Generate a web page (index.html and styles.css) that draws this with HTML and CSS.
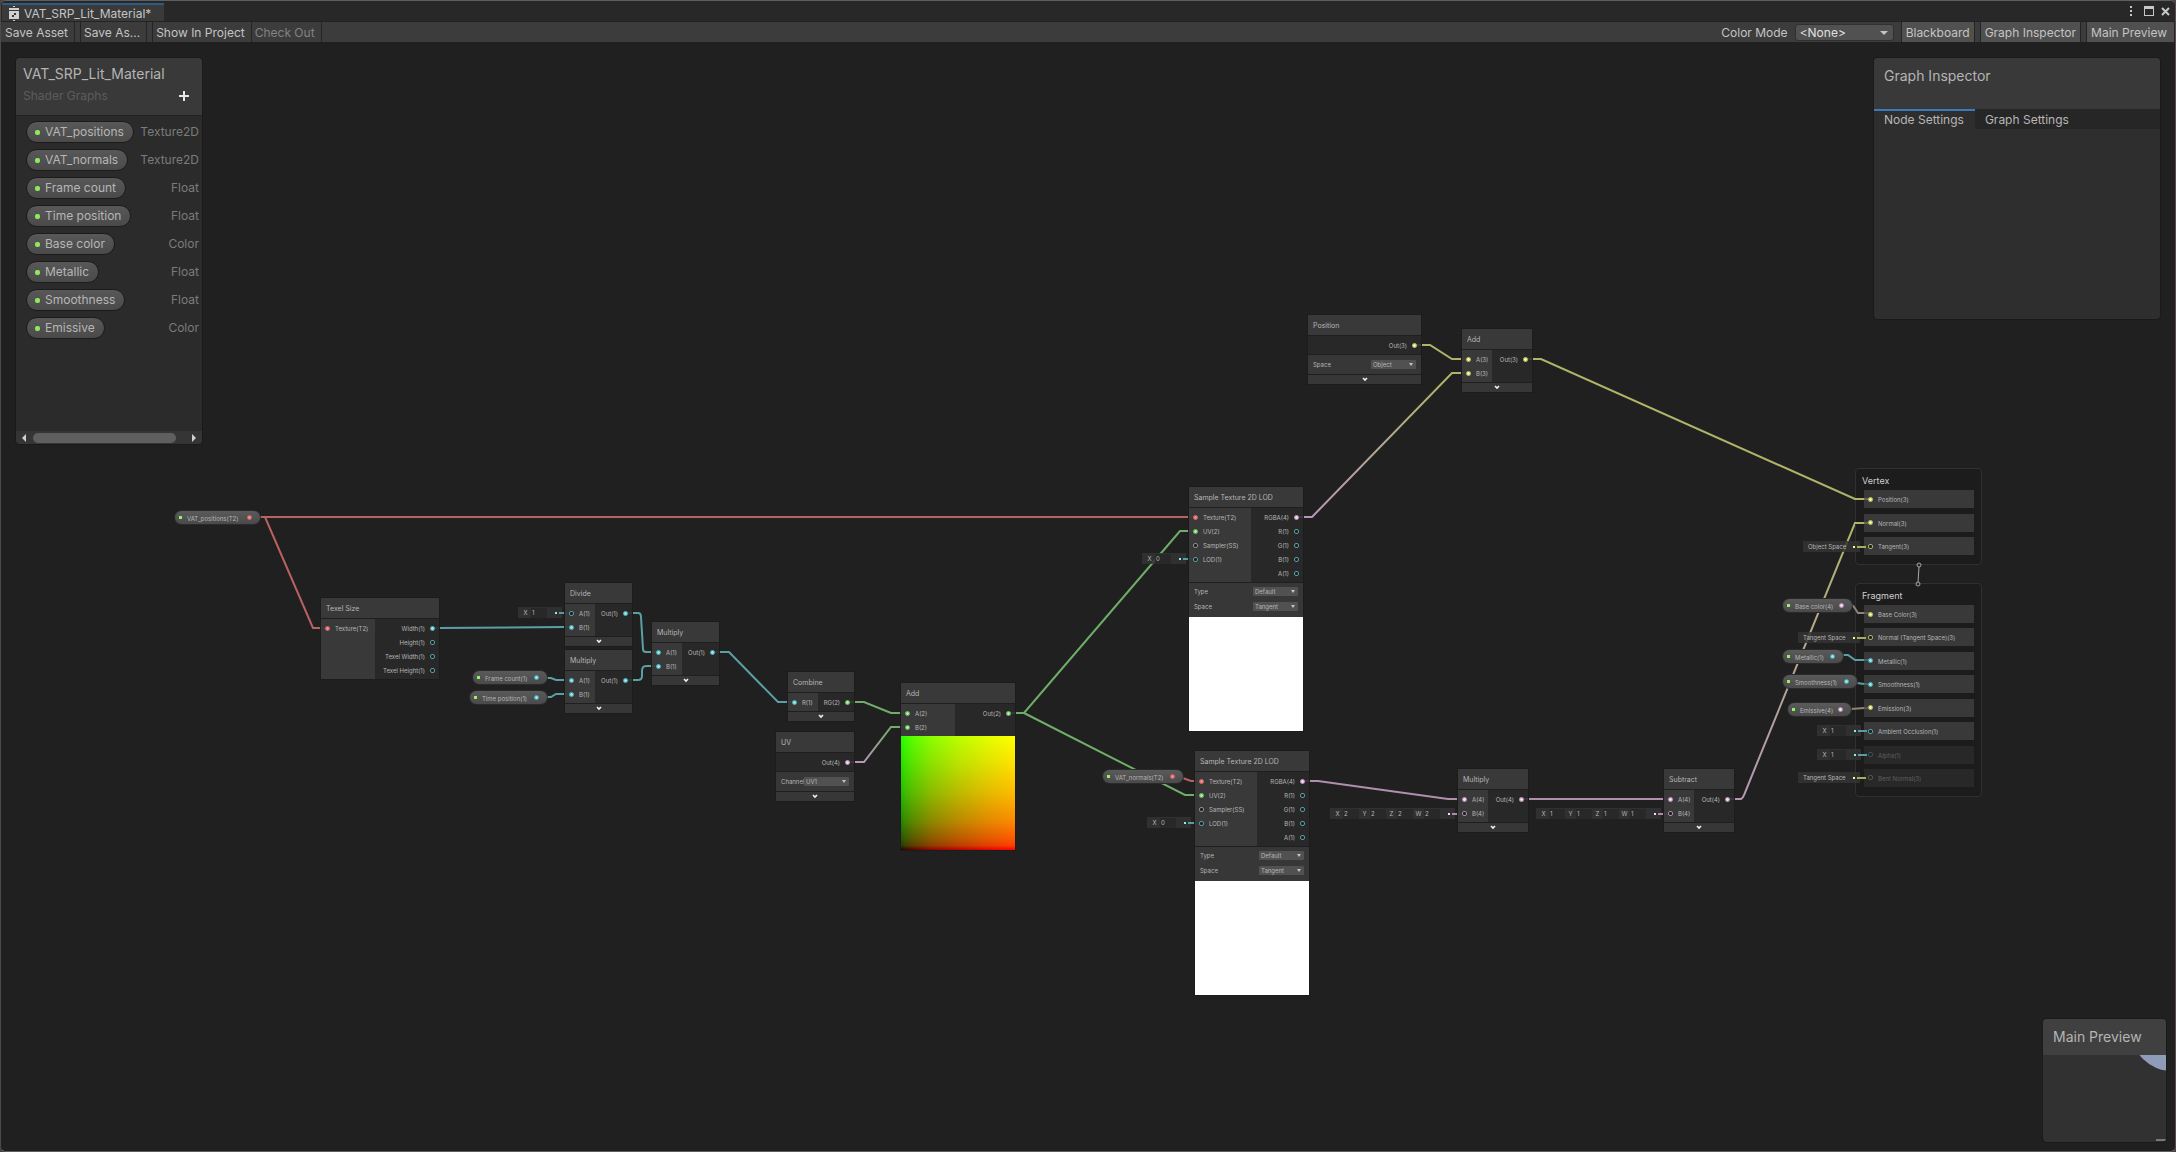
FILE: index.html
```html
<!DOCTYPE html>
<html lang="en">
<head>
<meta charset="utf-8">
<title>VAT_SRP_Lit_Material</title>
<link rel="stylesheet" href="styles.css">
</head>
<body>
<div class="window">
  <header class="titlebar">
    <div class="doc-tab">
      <svg class="doc-icon" width="12" height="16" viewBox="0 0 12 16"><path fill="#d0d0d0" fill-rule="evenodd" d="M5 0h2v1H5zM1 2h10v2H1zM1 5h10v8H1zM5 14h2v1H5zM6 7v2H4v2h2V9h2V7z"/></svg>
      <span>VAT_SRP_Lit_Material*</span>
    </div>
    <div class="window-controls">
      <button aria-label="Menu"><svg width="4" height="12" viewBox="0 0 4 12"><path fill="#c8c8c8" d="M1 1h2v2H1zM1 5h2v2H1zM1 9h2v2H1z"/></svg></button>
      <button aria-label="Maximize"><svg width="10" height="10" viewBox="0 0 10 10"><path fill="#c8c8c8" fill-rule="evenodd" d="M0 0h10v10H0zM1 3v6h8V3z"/></svg></button>
      <button aria-label="Close"><svg width="9" height="9" viewBox="0 0 9 9"><path stroke="#c8c8c8" stroke-width="2" d="M1 1l7 7M8 1l-7 7"/></svg></button>
    </div>
  </header>

  <nav class="toolbar">
    <button class="tool">Save Asset</button>
    <span class="tool-gap"></span>
    <button class="tool">Save As...</button>
    <span class="tool-gap"></span>
    <button class="tool">Show In Project</button>
    <button class="tool" disabled>Check Out</button>
    <span class="spacer"></span>
    <label class="tool-label" for="color-mode">Color Mode</label>
    <span class="dropdown dropdown-mode"><select id="color-mode"><option>&lt;None&gt;</option></select></span>
    <button class="tool on first-on">Blackboard</button>
    <span class="tool-gap"></span>
    <button class="tool on">Graph Inspector</button>
    <span class="tool-gap"></span>
    <button class="tool on">Main Preview</button>
  </nav>

  <main class="graph">
    <svg class="edges" width="2174" height="1108" viewBox="1 42 2174 1108">
      <defs>
        <linearGradient id="g-uv" gradientUnits="userSpaceOnUse" x1="864" y1="0" x2="891" y2="0"><stop offset="0" stop-color="#b597b5"/><stop offset="1" stop-color="#6fae68"/></linearGradient>
        <linearGradient id="g-pos" gradientUnits="userSpaceOnUse" x1="1312" y1="0" x2="1452" y2="0"><stop offset="0" stop-color="#b597b5"/><stop offset="1" stop-color="#b0b468"/></linearGradient>
        <linearGradient id="g-nrm" gradientUnits="userSpaceOnUse" x1="0" y1="799" x2="0" y2="523"><stop offset="0" stop-color="#b597b5"/><stop offset="1" stop-color="#b0b468"/></linearGradient>
      </defs>
      <path class="e-tex" d="M258 517H1195M258 517H265L313 628H328"/>
      <path class="e-float" d="M432 628H439L565 627H572"/>
      <path class="e-float" d="M626 613H638Q641 613 641 617L643 649Q643 652 646 652H658"/>
      <path class="e-float" d="M626 680H638Q642 680 642 676V671Q642 666 646 666H658"/>
      <path class="e-float" d="M544 678H551L556 680H572M544 697H551L556 694H572"/>
      <path class="e-float" d="M712 652H729L778 702H795"/>
      <path class="e-vec2" d="M847 702H864L891 713H907"/>
      <path stroke="url(#g-uv)" d="M847 762H864L891 727H907"/>
      <path class="e-vec2" d="M1008 713H1024L1180 531H1195M1024 713L1185 795H1201"/>
      <path class="e-tex" d="M1180 777L1191 781H1201"/>
      <path stroke="url(#g-pos)" d="M1296 517H1312L1452 373H1469"/>
      <path class="e-vec3" d="M1414 345H1430L1452 359H1469M1525 359H1541L1855 499H1870"/>
      <path class="e-vec4" d="M1302 781H1318L1448 799H1465M1521 799H1671"/>
      <path stroke="url(#g-nrm)" d="M1727 799H1741Q1743 798 1744 795L1855 523H1870"/>
    </svg>

    <!-- texture size and frame lookup -->
    <div class="pill-node" style="left:173px;top:468px;width:87px"><i class="key"></i><span>VAT_positions(T2)</span><i class="port tex on"></i></div>

    <section class="node" style="left:320px;top:556px;width:118px">
      <h3>Texel Size</h3>
      <div class="ports in54">
        <ul class="in"><li><i class="port tex on"></i>Texture(T2)</li></ul>
        <ul class="out"><li>Width(1)<i class="port float on"></i></li><li>Height(1)<i class="port float"></i></li><li>Texel Width(1)<i class="port float"></i></li><li>Texel Height(1)<i class="port float"></i></li></ul>
      </div>
    </section>

    <div class="slot float" style="left:517px;top:565px"><label for="dv-x">X</label><input id="dv-x" value="1"></div>
    <section class="node" style="left:564px;top:541px;width:67px">
      <h3>Divide</h3>
      <div class="ports in30">
        <ul class="in"><li><i class="port float"></i>A(1)</li><li><i class="port float on"></i>B(1)</li></ul>
        <ul class="out"><li>Out(1)<i class="port float on"></i></li></ul>
      </div>
      <button class="fold" aria-label="Collapse"><svg width="6" height="5" viewBox="0 0 6 5"><path d="M1 1l2 2 2-2"/></svg></button>
    </section>

    <div class="pill-node" style="left:471px;top:628px;width:76px"><i class="key"></i><span>Frame count(1)</span><i class="port float on"></i></div>
    <div class="pill-node" style="left:468px;top:648px;width:79px"><i class="key"></i><span>Time position(1)</span><i class="port float on"></i></div>
    <section class="node" style="left:564px;top:608px;width:67px">
      <h3>Multiply</h3>
      <div class="ports in30">
        <ul class="in"><li><i class="port float on"></i>A(1)</li><li><i class="port float on"></i>B(1)</li></ul>
        <ul class="out"><li>Out(1)<i class="port float on"></i></li></ul>
      </div>
      <button class="fold" aria-label="Collapse"><svg width="6" height="5" viewBox="0 0 6 5"><path d="M1 1l2 2 2-2"/></svg></button>
    </section>

    <section class="node" style="left:651px;top:580px;width:67px">
      <h3>Multiply</h3>
      <div class="ports in30">
        <ul class="in"><li><i class="port float on"></i>A(1)</li><li><i class="port float on"></i>B(1)</li></ul>
        <ul class="out"><li>Out(1)<i class="port float on"></i></li></ul>
      </div>
      <button class="fold" aria-label="Collapse"><svg width="6" height="5" viewBox="0 0 6 5"><path d="M1 1l2 2 2-2"/></svg></button>
    </section>

    <!-- UV offset -->
    <section class="node" style="left:787px;top:630px;width:66px">
      <h3>Combine</h3>
      <div class="ports in30">
        <ul class="in"><li><i class="port float on"></i>R(1)</li></ul>
        <ul class="out"><li>RG(2)<i class="port vec2 on"></i></li></ul>
      </div>
      <button class="fold" aria-label="Collapse"><svg width="6" height="5" viewBox="0 0 6 5"><path d="M1 1l2 2 2-2"/></svg></button>
    </section>

    <section class="node" style="left:775px;top:690px;width:78px">
      <h3>UV</h3>
      <div class="ports">
        <ul class="out"><li>Out(4)<i class="port vec4 on"></i></li></ul>
      </div>
      <div class="settings single">
        <div class="setting"><label for="uv-ch">Channel</label><span class="dropdown"><select id="uv-ch"><option>UV1</option></select></span></div>
      </div>
      <button class="fold" aria-label="Collapse"><svg width="6" height="5" viewBox="0 0 6 5"><path d="M1 1l2 2 2-2"/></svg></button>
    </section>

    <section class="node" style="left:900px;top:641px;width:114px">
      <h3>Add</h3>
      <div class="ports in54">
        <ul class="in"><li><i class="port vec2 on"></i>A(2)</li><li><i class="port vec2 on"></i>B(2)</li></ul>
        <ul class="out"><li>Out(2)<i class="port vec2 on"></i></li></ul>
      </div>
      <div class="preview uv-preview"></div>
    </section>

    <!-- position branch -->
    <div class="slot float" style="left:1141px;top:511px"><label for="lod-1">X</label><input id="lod-1" value="0"></div>
    <section class="node" style="left:1188px;top:445px;width:114px">
      <h3>Sample Texture 2D LOD</h3>
      <div class="ports in62">
        <ul class="in"><li><i class="port tex on"></i>Texture(T2)</li><li><i class="port vec2 on"></i>UV(2)</li><li><i class="port state"></i>Sampler(SS)</li><li><i class="port float"></i>LOD(1)</li></ul>
        <ul class="out"><li>RGBA(4)<i class="port vec4 on"></i></li><li>R(1)<i class="port float"></i></li><li>G(1)<i class="port float"></i></li><li>B(1)<i class="port float"></i></li><li>A(1)<i class="port float"></i></li></ul>
      </div>
      <div class="settings">
        <div class="setting"><label for="type-1">Type</label><span class="dropdown"><select id="type-1"><option>Default</option></select></span></div>
        <div class="setting"><label for="space-1">Space</label><span class="dropdown"><select id="space-1"><option>Tangent</option></select></span></div>
      </div>
      <div class="preview"></div>
    </section>

    <section class="node" style="left:1307px;top:273px;width:113px">
      <h3>Position</h3>
      <div class="ports">
        <ul class="out"><li>Out(3)<i class="port vec3 on"></i></li></ul>
      </div>
      <div class="settings single">
        <div class="setting"><label for="pos-space">Space</label><span class="dropdown"><select id="pos-space"><option>Object</option></select></span></div>
      </div>
      <button class="fold" aria-label="Collapse"><svg width="6" height="5" viewBox="0 0 6 5"><path d="M1 1l2 2 2-2"/></svg></button>
    </section>

    <section class="node" style="left:1461px;top:287px;width:70px">
      <h3>Add</h3>
      <div class="ports in30">
        <ul class="in"><li><i class="port vec3 on"></i>A(3)</li><li><i class="port vec3 on"></i>B(3)</li></ul>
        <ul class="out"><li>Out(3)<i class="port vec3 on"></i></li></ul>
      </div>
      <button class="fold" aria-label="Collapse"><svg width="6" height="5" viewBox="0 0 6 5"><path d="M1 1l2 2 2-2"/></svg></button>
    </section>

    <!-- normal branch -->
    <div class="pill-node" style="left:1101px;top:727px;width:82px"><i class="key"></i><span>VAT_normals(T2)</span><i class="port tex on"></i></div>
    <div class="slot float" style="left:1146px;top:775px"><label for="lod-2">X</label><input id="lod-2" value="0"></div>
    <section class="node" style="left:1194px;top:709px;width:114px">
      <h3>Sample Texture 2D LOD</h3>
      <div class="ports in62">
        <ul class="in"><li><i class="port tex on"></i>Texture(T2)</li><li><i class="port vec2 on"></i>UV(2)</li><li><i class="port state"></i>Sampler(SS)</li><li><i class="port float"></i>LOD(1)</li></ul>
        <ul class="out"><li>RGBA(4)<i class="port vec4 on"></i></li><li>R(1)<i class="port float"></i></li><li>G(1)<i class="port float"></i></li><li>B(1)<i class="port float"></i></li><li>A(1)<i class="port float"></i></li></ul>
      </div>
      <div class="settings">
        <div class="setting"><label for="type-2">Type</label><span class="dropdown"><select id="type-2"><option>Default</option></select></span></div>
        <div class="setting"><label for="space-2">Space</label><span class="dropdown"><select id="space-2"><option>Tangent</option></select></span></div>
      </div>
      <div class="preview"></div>
    </section>

    <div class="slot vec4" style="left:1329px;top:766px"><label for="m-x">X</label><input id="m-x" value="2"><label for="m-y">Y</label><input id="m-y" value="2"><label for="m-z">Z</label><input id="m-z" value="2"><label for="m-w">W</label><input id="m-w" value="2"></div>
    <section class="node" style="left:1457px;top:727px;width:70px">
      <h3>Multiply</h3>
      <div class="ports in30">
        <ul class="in"><li><i class="port vec4 on"></i>A(4)</li><li><i class="port vec4"></i>B(4)</li></ul>
        <ul class="out"><li>Out(4)<i class="port vec4 on"></i></li></ul>
      </div>
      <button class="fold" aria-label="Collapse"><svg width="6" height="5" viewBox="0 0 6 5"><path d="M1 1l2 2 2-2"/></svg></button>
    </section>

    <div class="slot vec4" style="left:1535px;top:766px"><label for="s-x">X</label><input id="s-x" value="1"><label for="s-y">Y</label><input id="s-y" value="1"><label for="s-z">Z</label><input id="s-z" value="1"><label for="s-w">W</label><input id="s-w" value="1"></div>
    <section class="node" style="left:1663px;top:727px;width:70px">
      <h3>Subtract</h3>
      <div class="ports in30">
        <ul class="in"><li><i class="port vec4 on"></i>A(4)</li><li><i class="port vec4"></i>B(4)</li></ul>
        <ul class="out"><li>Out(4)<i class="port vec4 on"></i></li></ul>
      </div>
      <button class="fold" aria-label="Collapse"><svg width="6" height="5" viewBox="0 0 6 5"><path d="M1 1l2 2 2-2"/></svg></button>
    </section>

    <!-- master stack -->
    <section class="context" style="left:1854px;top:426px;width:127px">
      <h2>Vertex</h2>
      <ul class="blocks vertex-blocks">
        <li><i class="port vec3 on"></i>Position(3)</li>
        <li><i class="port vec3 on"></i>Normal(3)</li>
        <li><i class="port vec3"></i>Tangent(3)</li>
      </ul>
    </section>
    <section class="context" style="left:1854px;top:541px;width:127px">
      <h2>Fragment</h2>
      <ul class="blocks fragment-blocks">
        <li><i class="port vec3 on"></i>Base Color(3)</li>
        <li><i class="port vec3"></i>Normal (Tangent Space)(3)</li>
        <li><i class="port float on"></i>Metallic(1)</li>
        <li><i class="port float on"></i>Smoothness(1)</li>
        <li><i class="port vec3 on"></i>Emission(3)</li>
        <li><i class="port float"></i>Ambient Occlusion(1)</li>
        <li class="inactive"><i class="port float"></i>Alpha(1)</li>
        <li class="inactive"><i class="port vec3"></i>Bent Normal(3)</li>
      </ul>
    </section>
    <svg class="edges" width="2174" height="1108" viewBox="1 42 2174 1108">
      <path class="link" d="M1919 567L1918 582"/>
      <circle class="link" cx="1919" cy="565" r="2"/><circle class="link" cx="1918" cy="584" r="2"/>
      <path class="e-base" d="M1851 604L1854 607L1858 613H1864"/>
      <path class="e-float" d="M1843 655H1848L1855 660H1864M1857 683L1864 684"/>
      <path class="e-base" d="M1851 709L1864 708"/>
      <path class="e-base dim" d="M1864 613H1869M1864 708H1869"/>
      <path class="e-float dim" d="M1864 660H1869M1864 684H1869"/>
      <path class="e-vec3" d="M1854 499H1864M1854 523H1864"/>
      <path class="e-vec3 dim" d="M1864 499H1869M1864 523H1869"/>
    </svg>

    <div class="slot vec3 space" style="left:1802px;top:499px">Object Space</div>
    <div class="slot vec3 space" style="left:1797px;top:590px">Tangent Space</div>
    <div class="slot float" style="left:1816px;top:683px"><label for="ao">X</label><input id="ao" value="1"></div>
    <div class="slot float" style="left:1816px;top:707px"><label for="alpha">X</label><input id="alpha" value="1"></div>
    <div class="slot vec3 space" style="left:1797px;top:730px">Tangent Space</div>
    <div class="pill-node" style="left:1781px;top:556px;width:71px"><i class="key"></i><span>Base color(4)</span><i class="port vec4 on"></i></div>
    <div class="pill-node" style="left:1781px;top:607px;width:62px"><i class="key"></i><span>Metallic(1)</span><i class="port float on"></i></div>
    <div class="pill-node" style="left:1781px;top:632px;width:76px"><i class="key"></i><span>Smoothness(1)</span><i class="port float on"></i></div>
    <div class="pill-node" style="left:1786px;top:660px;width:65px"><i class="key"></i><span>Emissive(4)</span><i class="port vec4 on"></i></div>

    <aside class="panel blackboard">
      <header>
        <h1>VAT_SRP_Lit_Material</h1>
        <div class="sub"><span>Shader Graphs</span><button aria-label="Add property"><svg width="10" height="10" viewBox="0 0 10 10"><path stroke="#e8e8e8" stroke-width="2" d="M5 0v10M0 5h10"/></svg></button></div>
      </header>
      <ul class="props">
        <li><span class="pill">VAT_positions</span><span class="type">Texture2D</span></li>
        <li><span class="pill">VAT_normals</span><span class="type">Texture2D</span></li>
        <li><span class="pill">Frame count</span><span class="type">Float</span></li>
        <li><span class="pill">Time position</span><span class="type">Float</span></li>
        <li><span class="pill">Base color</span><span class="type">Color</span></li>
        <li><span class="pill">Metallic</span><span class="type">Float</span></li>
        <li><span class="pill">Smoothness</span><span class="type">Float</span></li>
        <li><span class="pill">Emissive</span><span class="type">Color</span></li>
      </ul>
      <div class="scrollbar">
        <button aria-label="Scroll left"><svg width="4" height="8" viewBox="0 0 4 8"><path fill="#d0d0d0" d="M4 0v8L0 4z"/></svg></button>
        <span class="thumb"></span>
        <button aria-label="Scroll right"><svg width="4" height="8" viewBox="0 0 4 8"><path fill="#d0d0d0" d="M0 0v8l4-4z"/></svg></button>
      </div>
    </aside>

    <aside class="panel inspector">
      <header><h1>Graph Inspector</h1></header>
      <div class="tabs"><button class="active">Node Settings</button><button>Graph Settings</button></div>
    </aside>

    <aside class="panel main-preview">
      <header><h1>Main Preview</h1></header>
      <svg width="123" height="87" viewBox="2043 1055 123 87"><circle cx="2172" cy="1030" r="41" fill="#8e9bb9"/><path fill="#777" d="M2156 1139h10v2h-10z"/></svg>
    </aside>
  </main>
</div>
</body>
</html>
```
FILE: styles.css
```css
* { box-sizing: border-box; }

body {
  margin: 0;
  background: #4a4544;
  color: #c4c4c4;
  font: 12px/16px Inter, "Liberation Sans", sans-serif;
}

h1, h2, h3, ul { margin: 0; padding: 0; font-weight: 400; list-style: none; }

button, select, input {
  margin: 0;
  padding: 0;
  border: 0;
  background: none;
  color: inherit;
  font: inherit;
}

svg { display: block; flex: none; }

.window {
  display: flex;
  flex-direction: column;
  height: 100vh;
  overflow: hidden;
  border: 1px solid #635d5b;
  border-right-color: #5e4a4b;
  border-left-color: #4c4b4a;
  border-radius: 6px;
  background: #202020;
}

/* title bar */
.titlebar {
  display: flex;
  align-items: flex-end;
  justify-content: space-between;
  height: 21px;
  background: #282828;
  border-bottom: 1px solid #232323;
}
.doc-tab {
  display: flex;
  align-items: center;
  gap: 4px;
  height: 18px;
  margin-left: 1px;
  padding: 1px 13px 0 6px;
  background: #3a3a3a;
  border-top: 2px solid #2c5d87;
}
.window-controls {
  display: flex;
  align-items: center;
  gap: 7px;
  height: 20px;
  padding-right: 5px;
}
.window-controls button:first-child { margin-right: 4px; }

/* toolbar */
.toolbar {
  display: flex;
  align-items: stretch;
  height: 20px;
  padding-left: 1px;
  background: #3c3c3c;
}
.tool {
  padding: 1px 6px 0 3px;
  border-right: 1px solid #242424;
  white-space: nowrap;
}
.tool:disabled { color: #838383; }
.tool.on { padding: 1px 4px 0; background: #505050; }
.tool.on:last-child { padding-right: 7px; }
.first-on { border-left: 1px solid #242424; }
.tool-gap { width: 6px; border-right: 1px solid #242424; }
.spacer { flex: 1; }
.tool-label { padding: 3px 7px 0 0; }

.dropdown {
  position: relative;
  display: block;
  width: 45px;
  height: 9px;
  border-radius: 1px;
  background: #515151;
}
.dropdown select {
  display: block;
  width: 100%;
  height: 100%;
  padding-left: 2px;
  appearance: none;
  line-height: 9px;
}
.dropdown::after {
  content: "";
  position: absolute;
  right: 3px;
  top: 3px;
  border: 2px solid transparent;
  border-top: 3px solid #c4c4c4;
  border-bottom: 0;
}
.dropdown-mode {
  width: 99px;
  height: 17px;
  margin: 2px 7px 0 0;
  border: 1px solid #303030;
  border-radius: 3px;
}
.dropdown-mode select { padding-left: 4px; line-height: 15px; color: #e0e0e0; }
.dropdown-mode::after { right: 5px; top: 6px; border-width: 4px 4px 0; }

/* graph canvas */
.graph {
  position: relative;
  flex: 1;
  min-height: 0;
  overflow: hidden;
  background: #202020;
  font-size: 6px;
  line-height: 10px;
  color: #b6b6b6;
}
.edges {
  position: absolute;
  left: 0;
  top: 0;
  fill: none;
  stroke-width: 2;
  pointer-events: none;
}
.e-tex { stroke: #b96262; }
.e-float { stroke: #5b9fa5; }
.e-vec2 { stroke: #6fae68; }
.e-vec3 { stroke: #b0b468; }
.e-vec4 { stroke: #b08fae; }
.e-base { stroke: #8f8377; }
.dim { opacity: .4; }
.link { stroke: #a8a8a8; stroke-width: 1; }

.tex { --c: #f58a8a; --line: #b96262; }
.float { --c: #8aeef4; --line: #559da3; }
.vec2 { --c: #a6f59d; --line: #6aa663; }
.vec3 { --c: #f6fa9a; --line: #a9ad62; }
.vec4 { --c: #fbd8f9; --line: #ab8ba9; }
.state { --c: #b8b8b8; --line: #8c8c8c; }

.port {
  flex: none;
  width: 5px;
  height: 5px;
  border: 1px solid var(--line);
  border-radius: 2px;
  background: #1e1e1e;
}
.port.on { background: radial-gradient(var(--c) 1px, var(--line) 2px); }

/* nodes */
.node {
  position: absolute;
  display: flex;
  flex-direction: column;
  gap: 1px;
  background: rgba(32, 32, 32, .7);
  box-shadow: 0 0 0 1px #1c1c1c;
}
.node h3 {
  height: 20px;
  padding-left: 5px;
  background: #393939;
  font-size: 7px;
  line-height: 22px;
  white-space: nowrap;
}
.ports { display: grid; background: rgba(46, 46, 46, .6); }
.in30 { grid-template-columns: 30px 1fr; }
.in54 { grid-template-columns: 54px 1fr; }
.in62 { grid-template-columns: 62px 1fr; }
.ports ul { padding: 2px 4px; }
.ports .in { background: rgba(68, 68, 68, .6); }
.ports li, .blocks li {
  display: flex;
  align-items: center;
  gap: 5px;
  height: 14px;
  padding-top: 2px;
  white-space: nowrap;
}
.ports .port, .blocks .port { margin-bottom: 2px; }
.ports .out li { justify-content: flex-end; }
.settings {
  display: flex;
  flex-direction: column;
  gap: 6px;
  padding: 4px 5px 6px;
  background: #373737;
}
.single { padding: 5px; }
.setting { display: flex; align-items: center; height: 9px; }
.setting label { flex: 1; min-width: 0; overflow: hidden; }
.fold {
  display: flex;
  align-items: center;
  justify-content: center;
  height: 9px;
  background: #373737;
}
.fold path { fill: none; stroke: #f0f0f0; stroke-width: 1.6; }
.preview {
  aspect-ratio: 1;
  margin-top: -1px;
  background: #fff;
}
/* linear red and green ramps, gamma-encoded for display */
.uv-preview {
  background:
    linear-gradient(to right, #200000, #3f0000 4%, #590000 10%, #880000 25%, #ba0000 50%, #e00000 75%, #f00),
    linear-gradient(to top, #000, #003f00 4%, #005900 10%, #008800 25%, #00ba00 50%, #00e000 75%, #0f0);
  background-blend-mode: screen;
}

/* property reference pills on the canvas */
.pill-node {
  position: absolute;
  display: flex;
  align-items: center;
  height: 15px;
  padding: 0 8px 0 4px;
  border: 1px solid #2a2a2a;
  border-radius: 8px;
  background: linear-gradient(#5a5a5a, #4a4a4a);
  white-space: nowrap;
}
.pill-node span { flex: 1; padding: 2px 0 0 5px; }
.key { flex: none; width: 3px; height: 3px; background: #96f064; }

/* inline default values */
.slot {
  position: absolute;
  display: flex;
  align-items: center;
  height: 11px;
  padding: 0 15px 0 2px;
  background: rgba(52, 52, 52, .85);
}
.slot label { width: 11px; text-align: center; }
.slot input {
  width: 16px;
  height: 10px;
  padding-left: 1px;
  background: #282828;
}
.slot.space { padding: 0 14px 0 5px; white-space: nowrap; }
.slot::before, .slot::after {
  content: "";
  position: absolute;
  top: 5px;
  height: 2px;
}
.slot::before { right: 5px; width: 2px; background: var(--c); }
.slot::after { right: -6px; width: 9px; background: var(--line); }

/* master stack */
.context {
  position: absolute;
  padding: 5px 6px 9px;
  border: 1px solid #303030;
  border-radius: 4px;
  background: #1c1c1c;
}
.context h2 { height: 16px; font-size: 9px; line-height: 14px; color: #cfcfcf; }
.blocks {
  display: flex;
  flex-direction: column;
  justify-content: space-between;
  padding-left: 2px;
  width: 112px;
}
.vertex-blocks { height: 65px; }
.fragment-blocks { height: 182px; }
.blocks li {
  height: 18px;
  padding-left: 4px;
  background: #393939;
}
.blocks .inactive { background: #282828; color: #5f5f5f; }
.blocks .inactive .port { opacity: .35; }

/* floating panels */
.panel {
  position: absolute;
  display: flex;
  flex-direction: column;
  overflow: hidden;
  border-radius: 4px;
  background: #2e2e2e;
  box-shadow: 0 0 0 1px #1a1a1a;
  font-size: 12px;
  line-height: 16px;
}
.panel header { background: #393939; }
.panel h1 { font-size: 14px; line-height: 20px; color: #b4b4b4; }

.blackboard { left: 15px; top: 16px; width: 186px; height: 386px; background: #2b2b2b; }
.blackboard header {
  height: 58px;
  padding: 6px 13px 0 7px;
  border-bottom: 1px solid #202020;
}
.sub { display: flex; align-items: center; justify-content: space-between; color: #5c5c5c; margin-top: 4px; }
.props { flex: 1; padding: 2px 3px 0 10px; }
.props li { display: flex; align-items: center; justify-content: space-between; height: 28px; }
.pill {
  display: flex;
  align-items: center;
  gap: 5px;
  height: 22px;
  padding: 0 9px 0 8px;
  border: 1px solid #1c1c1c;
  border-radius: 11px;
  background: linear-gradient(#585858, #4a4a4a);
}
.pill::before { content: ""; width: 5px; height: 5px; border-radius: 2px; background: #8fe85c; }
.type { color: #7b7b7b; }
.scrollbar {
  display: flex;
  align-items: center;
  justify-content: space-between;
  height: 13px;
  padding: 0 6px;
  background: #353535;
}
.thumb { flex: 1; height: 10px; margin: 0 16px 0 7px; border-radius: 5px; background: #5f5f5f; }

.inspector { right: 15px; top: 16px; width: 286px; height: 261px; }
.inspector header { height: 51px; padding: 8px 10px; }
.tabs { display: flex; height: 20px; background: #262626; }
.tabs button { padding: 0 11px 0 10px; border-top: 2px solid transparent; }
.tabs .active { background: #2e2e2e; border-top-color: #3a79bb; }

.main-preview { right: 9px; bottom: 9px; width: 123px; background: #313131; }
.main-preview header { height: 36px; padding: 8px 10px; background: #404040; }
```
